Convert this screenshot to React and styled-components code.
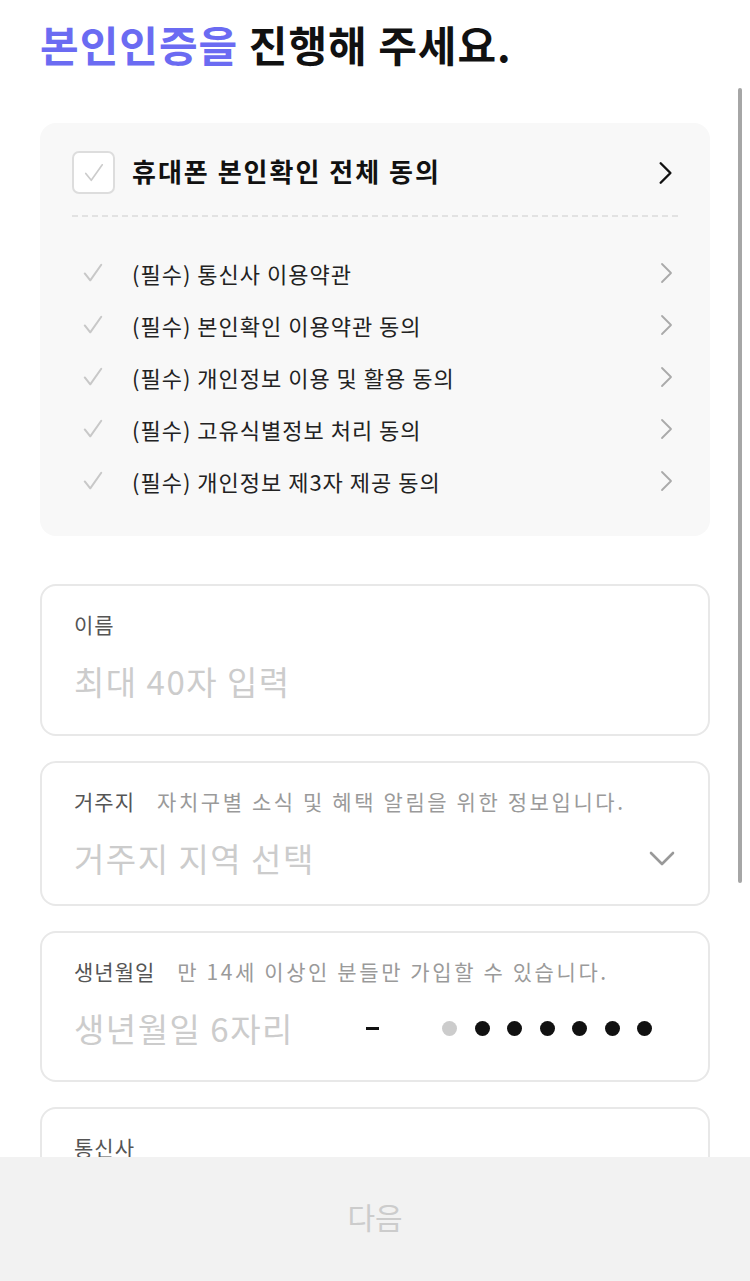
import React from 'react';
import styled, { createGlobalStyle } from 'styled-components';

const GlobalStyle = createGlobalStyle`
  html, body {
    margin: 0;
    padding: 0;
    background: #ffffff;
  }
  body {
    font-family: 'Noto Sans CJK KR', 'Noto Sans', sans-serif;
    color: #111111;
  }
`;

const Screen = styled.div`
  display: flex;
  flex-direction: column;
  height: 100vh;
  overflow: hidden;
  position: relative;
`;

const Scroll = styled.div`
  flex: 1;
  overflow: hidden;
  padding: 0 40px;
`;

const Title = styled.h1`
  margin: 0;
  padding-top: 13px;
  font-size: 42px;
  line-height: 62px;
  font-weight: 700;
  letter-spacing: 1px;
  color: #111111;
`;

const Accent = styled.span`
  color: #6b6bf2;
`;

const AgreeCard = styled.div`
  margin-top: 48px;
  background: #f8f8f8;
  border-radius: 16px;
  padding: 28px 32px 29px 32px;
`;

const AllRow = styled.div`
  display: flex;
  align-items: center;
  gap: 17px;
  padding-bottom: 21px;
  border-bottom: 2px dashed #e2e2e2;
`;

const CheckBox = styled.div`
  width: 43px;
  height: 43px;
  box-sizing: border-box;
  border: 2px solid #dddddd;
  border-radius: 7px;
  background: #ffffff;
  display: flex;
  align-items: center;
  justify-content: center;
`;

const AllText = styled.span`
  flex: 1;
  font-size: 26px;
  line-height: 36px;
  font-weight: 600;
  letter-spacing: 2px;
  margin-top: -3px;
`;

const ItemList = styled.div`
  display: flex;
  flex-direction: column;
  padding-top: 30px;
`;

const Item = styled.div`
  display: flex;
  align-items: center;
  height: 52px;
`;

const ItemCheck = styled.div`
  width: 60px;
  display: flex;
  padding-left: 10px;
  box-sizing: border-box;
`;

const ItemText = styled.span`
  flex: 1;
  font-size: 22px;
  letter-spacing: 1px;
  color: #222222;
`;

const Field = styled.div`
  margin-top: ${p => p.$gap}px;
  border: 2px solid #e8e8e8;
  border-radius: 16px;
  height: ${p => p.$h}px;
  box-sizing: border-box;
  padding: 23px 32px 0 32px;
`;

const LabelRow = styled.div`
  display: flex;
  align-items: baseline;
  gap: 22px;
  line-height: 30px;
`;

const Label = styled.span`
  font-size: 21px;
  letter-spacing: 1px;
  color: #555555;
`;

const Hint = styled.span`
  font-size: 21px;
  color: #9a9a9a;
  letter-spacing: 2.6px;
`;

const ValueRow = styled.div`
  display: flex;
  align-items: center;
  margin-top: 18px;
  height: 48px;
`;

const Placeholder = styled.span`
  font-size: 33px;
  color: #cccccc;
  letter-spacing: 1.5px;
  flex: ${p => (p.$grow ? 1 : 'none')};
  width: ${p => (p.$w ? `${p.$w}px` : 'auto')};
`;

const Dash = styled.span`
  width: 13px;
  height: 3px;
  background: #111111;
`;

const Dots = styled.div`
  display: flex;
  gap: 17.5px;
  margin-left: auto;
  margin-right: 24px;
`;

const Dot = styled.span`
  width: 15px;
  height: 15px;
  border-radius: 50%;
  background: ${p => (p.$off ? '#cccccc' : '#111111')};
`;

const Footer = styled.div`
  height: 124px;
  flex-shrink: 0;
  background: #f2f2f2;
  display: flex;
  align-items: center;
  justify-content: center;
  font-size: 30px;
  padding-bottom: 6px;
  box-sizing: border-box;
  color: #cccccc;
`;

const ScrollThumb = styled.div`
  position: absolute;
  right: 8px;
  top: 88px;
  width: 4px;
  height: 795px;
  border-radius: 2px;
  background: #a6a6a6;
`;

const Check = ({ size = 24, color = '#cccccc', width = 2 }) => (
  <svg width={size} height={size} viewBox="0 0 24 24" fill="none">
    <path d="M3 12.5 L9 20 L21 3" stroke={color} strokeWidth={width} strokeLinecap="round" strokeLinejoin="round" />
  </svg>
);

const Chevron = ({ color = '#aaaaaa', size = 24, width = 2 }) => (
  <svg width={size} height={size} viewBox="0 0 24 24" fill="none">
    <path d="M8 3 L17 12 L8 21" stroke={color} strokeWidth={width} strokeLinecap="round" strokeLinejoin="round" />
  </svg>
);

const ChevronDown = () => (
  <svg width="28" height="28" viewBox="0 0 28 28" fill="none">
    <path d="M3 9 L14 20 L25 9" stroke="#999999" strokeWidth="2.6" strokeLinecap="round" strokeLinejoin="round" />
  </svg>
);

const items = [
  '(필수) 통신사 이용약관',
  '(필수) 본인확인 이용약관 동의',
  '(필수) 개인정보 이용 및 활용 동의',
  '(필수) 고유식별정보 처리 동의',
  '(필수) 개인정보 제3자 제공 동의',
];

export default function App() {
  return (
    <Screen>
      <GlobalStyle />
      <Scroll>
        <Title>
          <Accent>본인인증을</Accent> 진행해 주세요.
        </Title>

        <AgreeCard>
          <AllRow>
            <CheckBox>
              <Check size={22} color="#cccccc" width={1.8} />
            </CheckBox>
            <AllText>휴대폰 본인확인 전체 동의</AllText>
            <Chevron color="#111111" size={26} width={2.2} />
          </AllRow>
          <ItemList>
            {items.map(text => (
              <Item key={text}>
                <ItemCheck>
                  <Check size={22} color="#c8c8c8" width={2.2} />
                </ItemCheck>
                <ItemText>{text}</ItemText>
                <Chevron color="#aaaaaa" size={24} width={1.8} />
              </Item>
            ))}
          </ItemList>
        </AgreeCard>

        <Field $gap={48} $h={152}>
          <LabelRow>
            <Label>이름</Label>
          </LabelRow>
          <ValueRow>
            <Placeholder $grow>최대 40자 입력</Placeholder>
          </ValueRow>
        </Field>

        <Field $gap={25} $h={145}>
          <LabelRow>
            <Label>거주지</Label>
            <Hint>자치구별 소식 및 혜택 알림을 위한 정보입니다.</Hint>
          </LabelRow>
          <ValueRow>
            <Placeholder $grow>거주지 지역 선택</Placeholder>
            <ChevronDown />
          </ValueRow>
        </Field>

        <Field $gap={25} $h={151}>
          <LabelRow>
            <Label>생년월일</Label>
            <Hint>만 14세 이상인 분들만 가입할 수 있습니다.</Hint>
          </LabelRow>
          <ValueRow>
            <Placeholder $w={292}>생년월일 6자리</Placeholder>
            <Dash />
            <Dots>
              <Dot $off />
              <Dot />
              <Dot />
              <Dot />
              <Dot />
              <Dot />
              <Dot />
            </Dots>
          </ValueRow>
        </Field>

        <Field $gap={25} $h={150}>
          <LabelRow>
            <Label>통신사</Label>
          </LabelRow>
        </Field>
      </Scroll>
      <Footer>다음</Footer>
      <ScrollThumb />
    </Screen>
  );
}
